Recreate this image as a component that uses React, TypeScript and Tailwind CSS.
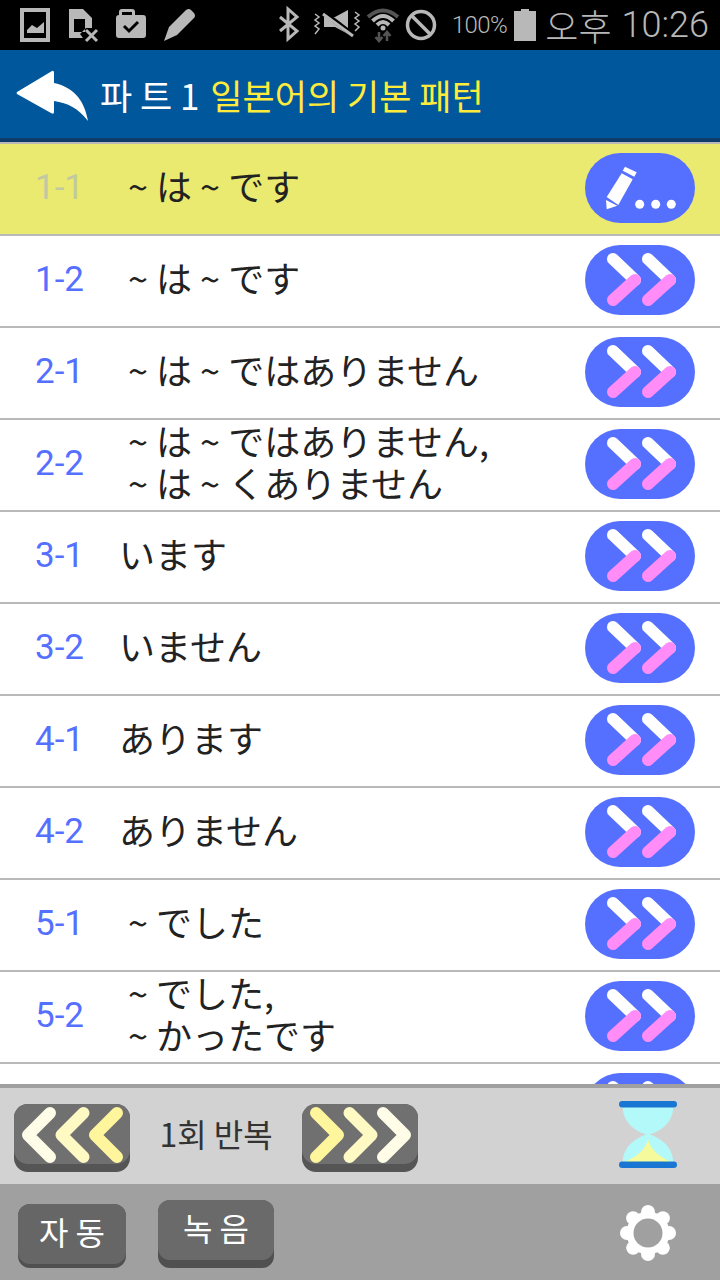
const rows: { n: string; lines: string[]; tilde?: boolean }[] = [
  { n: "1-1", lines: ["~ は ~ です"], tilde: true },
  { n: "1-2", lines: ["~ は ~ です"], tilde: true },
  { n: "2-1", lines: ["~ は ~ ではありません"], tilde: true },
  { n: "2-2", lines: ["~ は ~ ではありません,", "~ は ~ くありません"], tilde: true },
  { n: "3-1", lines: ["います"] },
  { n: "3-2", lines: ["いません"] },
  { n: "4-1", lines: ["あります"] },
  { n: "4-2", lines: ["ありません"] },
  { n: "5-1", lines: ["~ でした"], tilde: true },
  { n: "5-2", lines: ["~ でした,", "~ かったです"], tilde: true },
];

const jp = "font-['Noto_Sans_CJK_JP','Noto_Sans_CJK_KR',sans-serif]";
const kr = "font-['Noto_Sans_CJK_KR','Noto_Sans_CJK_JP',sans-serif]";

function ForwardIcon() {
  return (
    <svg width="110" height="70" viewBox="0 0 110 70" className="block">
      <rect x="0" y="0" width="110" height="70" rx="35" fill="#5570ff" />
      <g fill="none" strokeLinecap="round" strokeWidth="12">
        <path d="M28 14 L50 35" stroke="#fff" />
        <path d="M63 14 L85 35" stroke="#fff" />
        <path d="M50 35 L28 55" stroke="#ff8cf7" />
        <path d="M85 35 L63 55" stroke="#ff8cf7" />
      </g>
    </svg>
  );
}

function EditIcon() {
  return (
    <svg width="110" height="70" viewBox="0 0 110 70" className="block">
      <rect x="0" y="0" width="110" height="70" rx="35" fill="#5570ff" />
      <g fill="#fff">
        <path d="M36.700 20.300 L47.700 26.300 L33.300 52 L21.700 44 Z" />
        <path d="M40 13.700 L51.700 19.300 L49.300 23.700 L37.700 17.700 Z" />
        <path d="M21 47 L32.300 52.700 L21.700 56.300 Z" />
        <circle cx="54.700" cy="51.300" r="4.500" />
        <circle cx="70.700" cy="51.300" r="4.500" />
        <circle cx="86.300" cy="51.300" r="4.500" />
      </g>
    </svg>
  );
}

function Row({ n, lines, tilde, active }: { n: string; lines: string[]; tilde?: boolean; active?: boolean }) {
  return (
    <div className={`h-[92px] shrink-0 flex items-center border-b-2 border-[#b9b9b9] ${active ? "bg-[#e9ea6f]" : "bg-white"}`}>
      <div className={`w-[84px] ml-[35px] pb-[4px] shrink-0 font-['Roboto',sans-serif] text-[35px] leading-none ${active ? "text-[#c2c9a0]" : "text-[#5570ff]"}`}>
        {n}
      </div>
      <div className={`flex-1 pb-[8px] ${tilde ? "pl-[9px]" : ""} ${jp} text-[36px] leading-[42px] text-[#222] whitespace-nowrap`}>
        {lines.map((l) => (
          <div key={l}>{l}</div>
        ))}
      </div>
      <div className="mr-[25px] mb-[2px] shrink-0">{active ? <EditIcon /> : <ForwardIcon />}</div>
    </div>
  );
}

function Chevrons({ dir }: { dir: "l" | "r" }) {
  const colors = dir === "l" ? ["#fffde7", "#fff9c4", "#fff59d"] : ["#fff59d", "#fff9c4", "#fffde7"];
  const pts = dir === "l" ? (x: number) => `M${x + 22} 9 L${x} 31 L${x + 22} 53` : (x: number) => `M${x} 9 L${x + 22} 31 L${x} 53`;
  const xs = [14, 47.5, 81];
  return (
    <div className="w-[116px] h-[68px] rounded-[14px] bg-[#555] pb-[8px] shrink-0">
      <div className="w-full h-[60px] rounded-[14px] bg-[#707070]">
        <svg width="116" height="60" viewBox="0 0 116 60" className="block" fill="none" strokeLinecap="round" strokeLinejoin="round" strokeWidth="12">
          {xs.map((x, i) => (
            <path key={x} d={pts(x)} stroke={colors[i]} />
          ))}
        </svg>
      </div>
    </div>
  );
}

function Hourglass() {
  return (
    <svg width="58" height="67" viewBox="0 0 58 67" className="block">
      <path d="M3.500 3 H54.500 C54.500 22 43 29 31 33.500 C43 38 54.500 46 54.500 64 H3.500 C3.500 46 15 38 27 33.500 C15 29 3.500 22 3.500 3 Z" fill="#b4f9f9" />
      <path d="M29 38 C31 48 40 56 53 61 H5 C18 56 27 48 29 38 Z" fill="#f5fa9c" />
      <rect x="0" y="0" width="58" height="6.500" rx="3.250" fill="#1976d2" />
      <rect x="0" y="60.500" width="58" height="6.500" rx="3.250" fill="#1976d2" />
    </svg>
  );
}

function Gear() {
  const teeth = [0, 45, 90, 135, 180, 225, 270, 315];
  return (
    <svg width="56" height="56" viewBox="0 0 56 56" className="block">
      <g fill="#fff">
        <circle cx="28" cy="28" r="21.500" />
        {teeth.map((a) => (
          <circle key={a} cx="28" cy="7" r="7" transform={`rotate(${a} 28 28)`} />
        ))}
      </g>
      <circle cx="28" cy="28" r="14.500" fill="#a0a0a0" />
    </svg>
  );
}

function StatusLeft() {
  return (
    <div className="flex items-center">
      <svg width="200" height="50" viewBox="0 0 200 50" className="block" fill="#b8b8b8">
        <path fillRule="evenodd" d="M20 8 H50 V42 H20 Z M24 12 V38 H46 V12 Z" />
        <path d="M27 33 L27 30 L32 25 L37 28 L44 22 L44 33 Z" />
        <path fillRule="evenodd" d="M69 9 H83 L92 18 V28 L86 28 L80 34 L83 38 H69 Z M74 19 V32 H85 V19 Z" />
        <path d="M76 21 H78 V23 H76 Z M80 21 H83 V23 H80 Z M76 25 H78 V27 H76 Z M80 25 H83 V27 H80 Z M76 29 H78 V31 H76 Z" fill="#000" />
        <path d="M86 30 L97 41 M97 30 L86 41" stroke="#b8b8b8" strokeWidth="3" fill="none" />
        <path fillRule="evenodd" d="M119 15 V12 Q119 9 122 9 H132 Q135 9 135 12 V15 H143 Q146 15 146 18 V35 Q146 38 143 38 H119 Q116 38 116 35 V18 Q116 15 119 15 Z M122 15 H132 V12 H122 Z" />
        <path d="M124 26 L129 31 L138 22" stroke="#000" strokeWidth="3" fill="none" />
        <path d="M164 41 L169 27 L186 10 Q189 8 191 10 L194 13 Q196 16 194 18 L177 35 Z" />
      </svg>
    </div>
  );
}

function StatusRight() {
  return (
    <div className="flex items-center">
      <svg width="158" height="50" viewBox="0 0 158 50" className="block shrink-0" fill="none" stroke="#b8b8b8">
        <path d="M1 17 L18 31 L9 39 V9 L18 17 L1 31" strokeWidth="3" />
        <path d="M36 14 L40 17 L36 20 L40 23 L36 26 L40 29 L36 34" strokeWidth="1.500" />
        <path d="M45 17 H56 L69 10 V34 L56 27 H45 Z" fill="#b8b8b8" stroke="none" />
        <path d="M44 12 L74 35" stroke="#000" strokeWidth="5" />
        <path d="M44 14 L74 36" strokeWidth="3" />
        <path d="M76 12 L80 15 L76 18 L80 21 L76 24 L80 27 L76 31" strokeWidth="1.500" />
        <path d="M89 17 Q104 4 119 17" strokeWidth="4" stroke="#555" />
        <path d="M93.500 21 Q104 11 114.500 21" strokeWidth="4" />
        <path d="M98 25 Q104 19 110 25" strokeWidth="4" />
        <circle cx="104" cy="28" r="2.500" fill="#b8b8b8" stroke="none" />
        <path d="M100 32 V41 M96.500 37 L100 41 L103.500 37" strokeWidth="2.500" stroke="#555" />
        <path d="M108 41 V32 M104.500 36 L108 32 L111.500 36" strokeWidth="2.500" stroke="#555" />
        <circle cx="142" cy="25" r="13.500" strokeWidth="3.500" />
        <path d="M133 16 L151 34" strokeWidth="3.500" />
      </svg>
      <span className="ml-[15px] font-['Roboto',sans-serif] text-[24px] leading-none text-[#b8b8b8] tracking-[-0.5px] font-light">100%</span>
      <svg width="22" height="32" viewBox="0 0 22 32" className="block ml-[7px]" fill="#b8b8b8">
        <path d="M7 0 H15 V2 H22 V32 H0 V2 H7 Z" />
      </svg>
      <span className={`ml-[9px] ${kr} text-[36px] leading-none text-[#b8b8b8] font-light`}>오후</span>
      <span className="ml-[10px] font-['Roboto',sans-serif] text-[36px] leading-none text-[#b8b8b8] font-light">10:26</span>
    </div>
  );
}

export default function App() {
  return (
    <div className="w-[720px] h-[1280px] flex flex-col overflow-hidden bg-white">
      <div className="h-[50px] shrink-0 bg-black flex items-center justify-between pr-[11px]">
        <StatusLeft />
        <StatusRight />
      </div>
      <div className="h-[88px] shrink-0 bg-[#01579b] flex items-center pl-[16px]">
        <svg width="72" height="52" viewBox="0 0 72 52" className="block shrink-0 mt-[3px]">
          <path d="M1 22 L36 1 Q38 0 38 3 V13 C56 17 68 28 72 51 C62 38 52 33 38 31 V42 Q38 45 35 43 L1 24 Q0 23 1 22 Z" fill="#fff" />
        </svg>
        <div className={`ml-[12px] ${kr} text-[35px] leading-none whitespace-nowrap`}>
          <span className="text-white">파 트 1 </span>
          <span className="ml-[3px] text-[#ffeb3b]">일본어의 기본 패턴</span>
        </div>
      </div>
      <div className="h-[4px] shrink-0 bg-[#0d3c6b]" />
      <div className="h-[2px] shrink-0 bg-[#b9b9b9]" />
      <div className="flex-1 min-h-0 overflow-hidden flex flex-col">
        {rows.map((r, i) => (
          <Row key={r.n} n={r.n} lines={r.lines} tilde={r.tilde} active={i === 0} />
        ))}
        <div className="bg-white flex justify-end pr-[25px] pt-[9px] shrink-0">
          <ForwardIcon />
        </div>
      </div>
      <div className="h-[4px] shrink-0 bg-[#a0a0a0]" />
      <div className="h-[96px] shrink-0 bg-[#d2d2d2] flex items-center pl-[14px] pr-[43px] pt-[4px]">
        <Chevrons dir="l" />
        <div className={`w-[172px] pb-[10px] text-center ${kr} text-[32px] leading-none text-[#333]`}>1회 반복</div>
        <Chevrons dir="r" />
        <div className="ml-auto mb-[8px]">
          <Hourglass />
        </div>
      </div>
      <div className="h-[96px] shrink-0 bg-[#a0a0a0] flex items-end pl-[18px] pr-[44px] pb-[12px]">
        <div className="w-[108px] h-[64px] rounded-[12px] bg-[#505050] pb-[4px]">
          <div className={`h-[60px] pb-[6px] rounded-[12px] bg-[#666] flex items-center justify-center ${kr} text-[32px] text-white leading-none`}>자 동</div>
        </div>
        <div className="ml-[32px] w-[116px] h-[68px] rounded-[12px] bg-[#505050] pb-[8px]">
          <div className={`h-[60px] pb-[6px] rounded-[12px] bg-[#6a6a6a] flex items-center justify-center ${kr} text-[32px] text-white leading-none`}>녹 음</div>
        </div>
        <div className="ml-auto mb-[7px]">
          <Gear />
        </div>
      </div>
    </div>
  );
}
